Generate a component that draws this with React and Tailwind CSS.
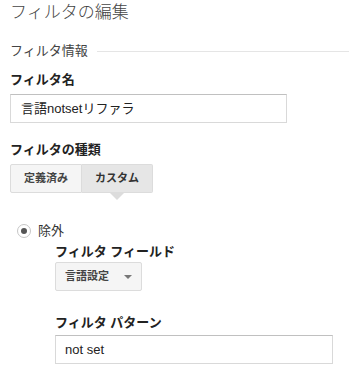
import React from 'react';

const font = { fontFamily: '"Liberation Sans", Arial, "Noto Sans CJK JP", sans-serif' };

export default function App() {
  return (
    <div style={font} className="w-[349px] h-[376px] bg-white overflow-hidden pl-[10px] text-[#333]">
      {/* 見出し */}
      <h1 className="mt-[1px] h-[24px] text-[17px] leading-[24px] font-light text-[#444]">フィルタの編集</h1>

      <div className="mt-[17px] flex items-center h-[18px]">
        <span className="text-[13px] leading-[18px] text-[#444]">フィルタ情報</span>
        <div className="ml-[9px] flex-1 h-px bg-[#e5e5e5]" />
      </div>

      <div className="mt-[11px] text-[13px] leading-[18px] font-bold text-[#222]">フィルタ名</div>
      <div className="mt-[5px] w-[277px] h-[29px] border border-[#d9d9d9] border-t-[#c0c0c0] flex items-center pl-[10px] text-[13px] text-[#222]">
        言語notsetリファラ
      </div>

      <div className="mt-[18px] text-[13px] leading-[18px] font-bold text-[#222]">フィルタの種類</div>
      <div className="mt-[5px] flex relative">
        <div className="w-[72px] h-[29px] flex items-center justify-center bg-[#f5f5f5] border border-[#dcdcdc] rounded-l-[2px] text-[11px] font-bold text-[#444]">定義済み</div>
        <div className="relative w-[71px] h-[29px] flex items-center justify-center bg-[#e6e6e6] border border-l-0 border-[#dcdcdc] rounded-r-[2px] text-[11px] font-bold text-[#333]">
          カスタム
          <div className="absolute left-1/2 -translate-x-1/2 top-[28px] w-0 h-0 border-l-[7px] border-r-[7px] border-t-[7px] border-l-transparent border-r-transparent border-t-[#dcdcdc]" />
        </div>
      </div>

      <div className="mt-[29px] ml-[7px] flex items-center h-[18px]">
        <span className="w-[14px] h-[14px] rounded-full border border-[#c6c6c6] bg-white flex items-center justify-center">
          <span className="w-[6px] h-[6px] rounded-full bg-[#555]" />
        </span>
        <span className="ml-[7px] text-[13px] leading-[18px] text-[#333]">除外</span>
      </div>

      <div className="ml-[45px]">
        <div className="mt-[3px] text-[13px] leading-[18px] font-bold text-[#222]">フィルタ フィールド</div>
        <div className="mt-[1px] w-[87px] h-[29px] bg-[#f5f5f5] border border-[#dcdcdc] rounded-[2px] flex items-center pl-[9px] text-[11px] font-bold text-[#444]">
          言語設定
          <span className="ml-auto mr-[9px] w-0 h-0 border-l-[4px] border-r-[4px] border-t-[4px] border-l-transparent border-r-transparent border-t-[#777]" />
        </div>

        <div className="mt-[23px] text-[13px] leading-[18px] font-bold text-[#222]">フィルタ パターン</div>
        <div className="mt-[3px] w-[278px] h-[29px] border border-[#d9d9d9] border-t-[#c0c0c0] flex items-center pl-[9px] text-[13px] text-[#222]">
          not set
        </div>
      </div>
    </div>
  );
}
